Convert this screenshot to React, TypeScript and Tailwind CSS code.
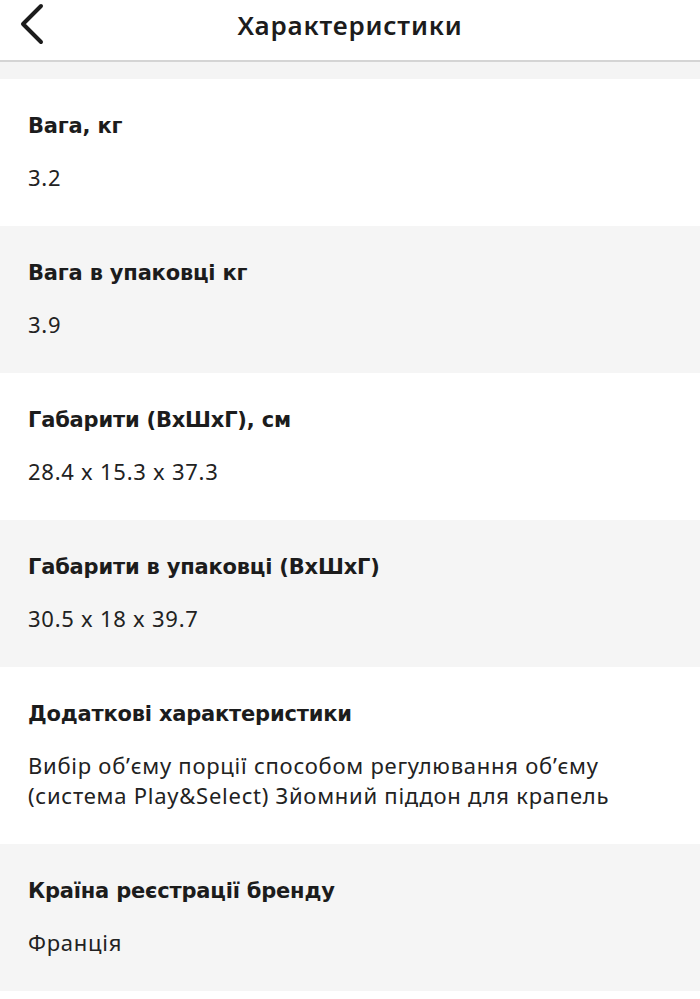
import React from 'react';

const specs: { title: string; value: string[] }[] = [
  { title: 'Вага, кг', value: ['3.2'] },
  { title: 'Вага в упаковці кг', value: ['3.9'] },
  { title: 'Габарити (ВхШхГ), см', value: ['28.4 x 15.3 x 37.3'] },
  { title: 'Габарити в упаковці (ВхШхГ)', value: ['30.5 x 18 x 39.7'] },
  {
    title: 'Додаткові характеристики',
    value: [
      'Вибір об’єму порції способом регулювання об’єму',
      '(система Play&Select) Зйомний піддон для крапель',
    ],
  },
  { title: 'Країна реєстрації бренду', value: ['Франція'] },
];

const App = () => {
  return (
    <div className="w-[700px] min-h-[999px] bg-white text-[#1c1c1c] font-['Noto_Sans',sans-serif]">
      {/* шапка */}
      <div className="h-[62px] flex items-center relative border-b-2 border-[#d4d4d4] bg-white">
        <button className="absolute left-[14px] top-[2px] w-[34px] h-[44px] flex items-center justify-center">
          <svg width="28" height="42" viewBox="0 0 28 42" fill="none">
            <path d="M24 3 L6 21 L24 39" stroke="#1c1c1c" strokeWidth="4" strokeLinecap="round" strokeLinejoin="round" />
          </svg>
        </button>
        <h1 className="w-full text-center text-[26px] font-semibold leading-none -mt-[10px] tracking-[0.8px]">Характеристики</h1>
      </div>
      <div className="h-[17px] bg-[#f4f4f4]" />

      {/* список характеристик */}
      {specs.map((s, idx) => (
        <div key={idx} className={`pl-[28px] pr-4 pt-[32px] pb-[34px] ${idx % 2 === 1 ? 'bg-[#f5f5f5]' : 'bg-white'}`}>
          <div className="text-[21px] font-bold leading-[30px] font-['DejaVu_Sans',sans-serif] tracking-[-0.2px]">{s.title}</div>
          <div className="mt-[21px] text-[22px] leading-[30px] tracking-[0.75px] text-[#222]">
            {s.value.map((v, i) => (
              <div key={i}>{v}</div>
            ))}
          </div>
        </div>
      ))}
    </div>
  );
};

export default App;
